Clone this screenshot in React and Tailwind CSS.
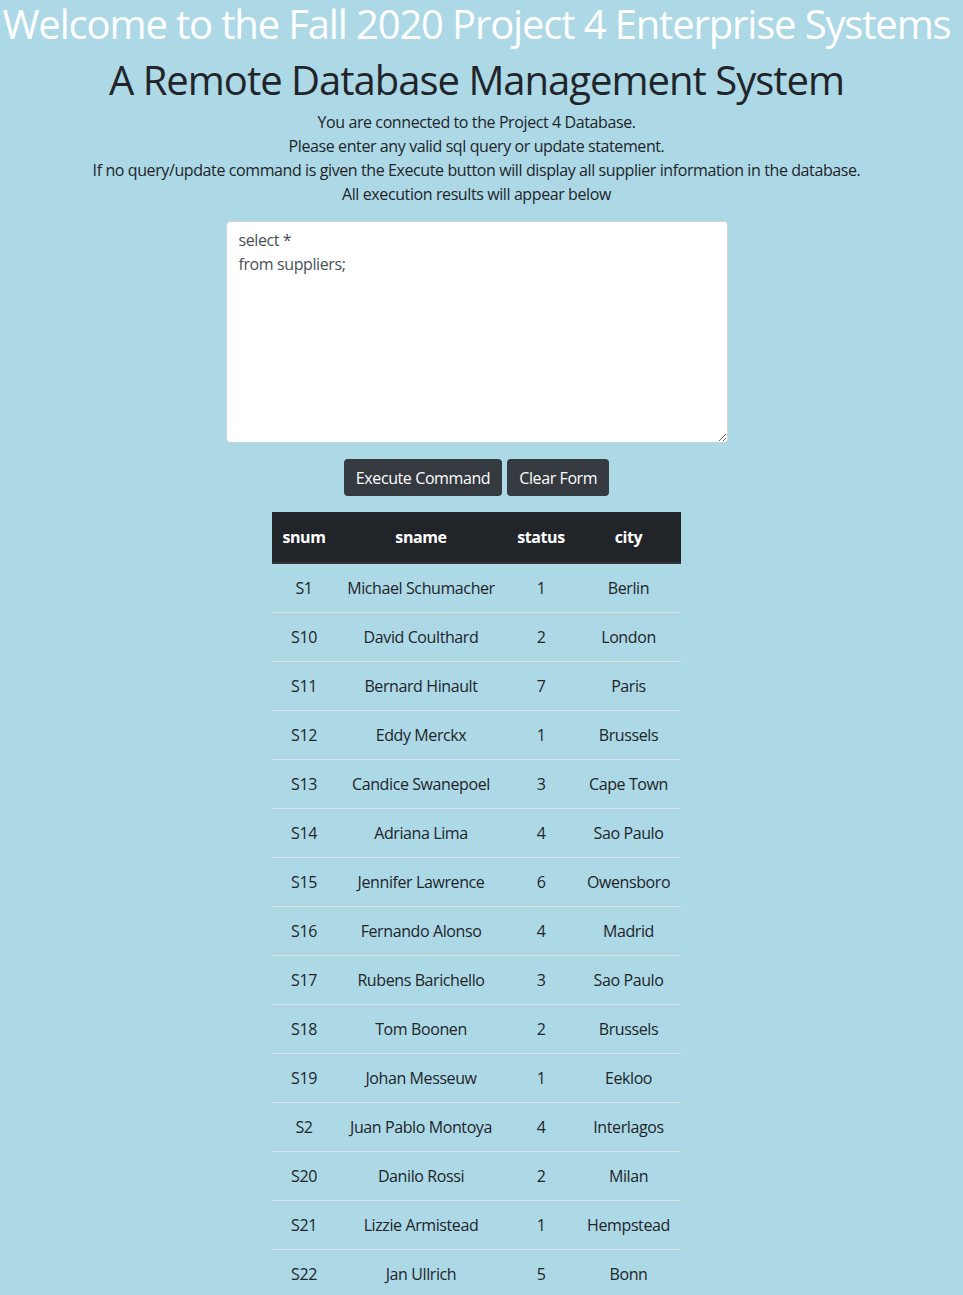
const rows = [
  ["S1", "Michael Schumacher", "1", "Berlin"],
  ["S10", "David Coulthard", "2", "London"],
  ["S11", "Bernard Hinault", "7", "Paris"],
  ["S12", "Eddy Merckx", "1", "Brussels"],
  ["S13", "Candice Swanepoel", "3", "Cape Town"],
  ["S14", "Adriana Lima", "4", "Sao Paulo"],
  ["S15", "Jennifer Lawrence", "6", "Owensboro"],
  ["S16", "Fernando Alonso", "4", "Madrid"],
  ["S17", "Rubens Barichello", "3", "Sao Paulo"],
  ["S18", "Tom Boonen", "2", "Brussels"],
  ["S19", "Johan Messeuw", "1", "Eekloo"],
  ["S2", "Juan Pablo Montoya", "4", "Interlagos"],
  ["S20", "Danilo Rossi", "2", "Milan"],
  ["S21", "Lizzie Armistead", "1", "Hempstead"],
  ["S22", "Jan Ullrich", "5", "Bonn"],
  ["S23", "Mark Cavendish", "3", "Douglas"],
];

export default function App() {
  return (
    <div className="min-h-screen w-full bg-[#add8e6] text-[#212529] font-['Open_Sans',sans-serif]">
      <div className="w-[953px] flex flex-col items-center text-center">
        <h1 className="h-[48px] text-[40px] leading-[48px] text-white tracking-[-1.15px] whitespace-nowrap">
          Welcome to the Fall 2020 Project 4 Enterprise Systems
        </h1>
        <h1 className="mt-[8px] h-[48px] text-[40px] leading-[48px] tracking-[-1px] whitespace-nowrap">
          A Remote Database Management System
        </h1>
        <div className="mt-[6px] text-[16px] leading-[24px] tracking-[-0.4px]">
          <p>You are connected to the Project 4 Database.</p>
          <p>Please enter any valid sql query or update statement.</p>
          <p>If no query/update command is given the Execute button will display all supplier information in the database.</p>
          <p>All execution results will appear below</p>
        </div>
        <textarea
          className="mt-[15px] w-[502px] h-[222px] bg-white border border-[#ced4da] rounded-[4px] px-[12px] py-[6px] text-[16px] leading-[24px] text-[#495057] tracking-[-0.4px] outline-none"
          defaultValue={"select *\nfrom suppliers;"}
        />
        <div className="mt-[16px] flex gap-[5px]">
          <button className="h-[37px] px-[12px] rounded-[4px] bg-[#343a40] text-white text-[16px] tracking-[-0.4px]">
            Execute Command
          </button>
          <button className="h-[37px] px-[12px] rounded-[4px] bg-[#343a40] text-white text-[16px] tracking-[-0.4px]">
            Clear Form
          </button>
        </div>
        <table className="mt-[16px] w-[409px] table-fixed border-collapse text-[16px] leading-[24px] tracking-[-0.4px]">
          <thead>
            <tr className="bg-[#212529] text-white">
              <th className="w-[64px] px-0 py-[13px] border-b-2 border-[#32383e] font-bold">snum</th>
              <th className="w-[170px] px-0 py-[13px] border-b-2 border-[#32383e] font-bold">sname</th>
              <th className="w-[70px] px-0 py-[13px] border-b-2 border-[#32383e] font-bold">status</th>
              <th className="w-[105px] px-0 py-[13px] border-b-2 border-[#32383e] font-bold">city</th>
            </tr>
          </thead>
          <tbody>
            {rows.map((r) => (
              <tr key={r[0]} className="border-b border-[#dee2e6]">
                {r.map((c, i) => (
                  <td key={i} className="px-0 py-[12px] whitespace-nowrap">
                    {c}
                  </td>
                ))}
              </tr>
            ))}
          </tbody>
        </table>
      </div>
    </div>
  );
}
